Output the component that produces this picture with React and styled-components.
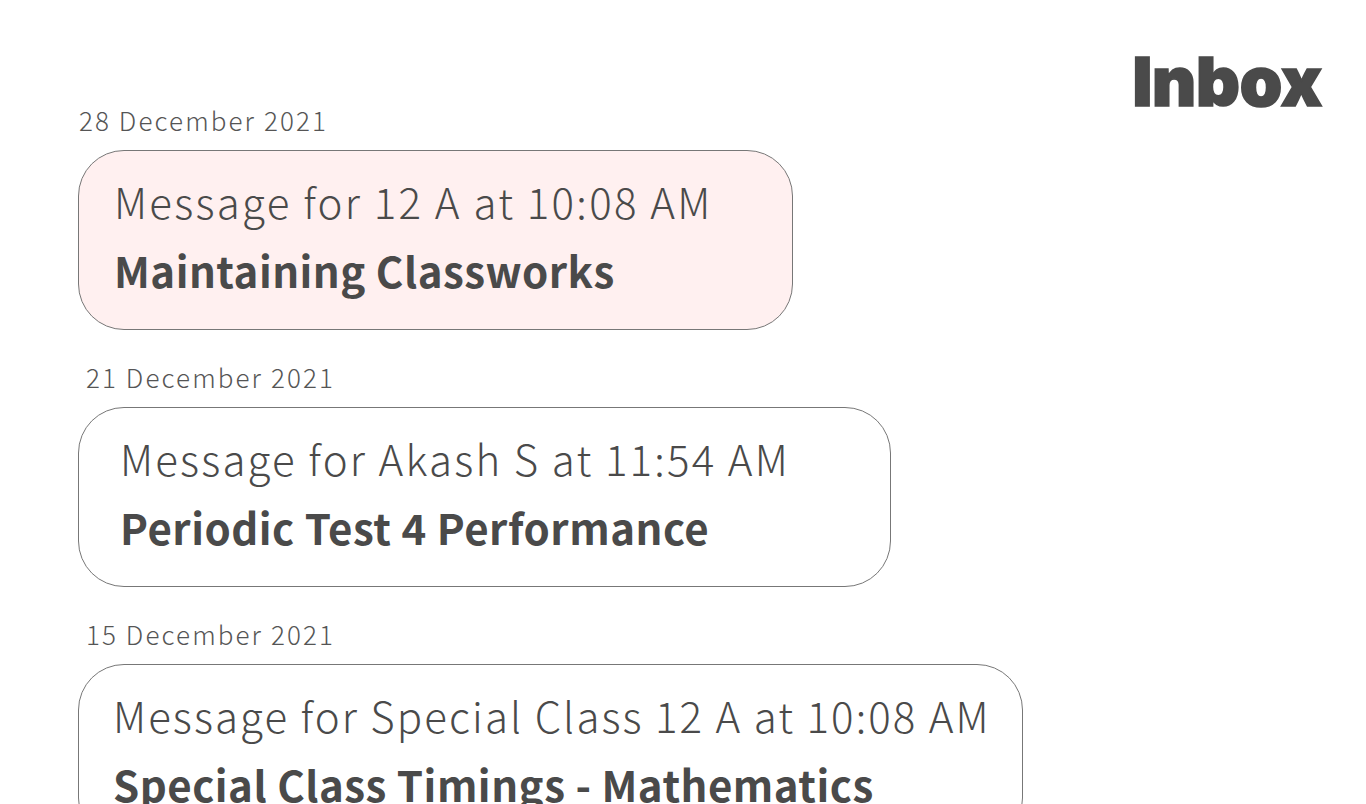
import React from "react";
import styled, { createGlobalStyle } from "styled-components";

const GlobalStyle = createGlobalStyle`
  body {
    margin: 0;
    background: #ffffff;
    font-family: "Noto Sans CJK JP", "Noto Sans", sans-serif;
    color: #4a4a4a;
  }
`;

const Page = styled.main`
  padding: 46px 44px 0 78px;
  height: 804px;
  box-sizing: border-box;
  overflow: hidden;
`;

const Header = styled.header`
  display: flex;
  justify-content: flex-end;
  align-items: flex-start;
  height: 59px;
  padding-top: 2px;
  box-sizing: border-box;
`;

const Title = styled.h1`
  margin: 0;
  font-family: Inter, "Liberation Sans", sans-serif;
  font-weight: 900;
  font-size: 68px;
  line-height: 66px;
  letter-spacing: -0.2px;
  color: #4a4a4a;
  -webkit-text-stroke: 1.6px #4a4a4a;
`;

const List = styled.section`
  display: flex;
  flex-direction: column;
  gap: 32px;
`;

const Entry = styled.article`
  display: flex;
  flex-direction: column;
  align-items: flex-start;
`;

const DateLabel = styled.div`
  font-size: 26px;
  line-height: 30px;
  font-weight: 300;
  letter-spacing: 2.1px;
  color: #555555;
  padding-left: ${p => p.$indent}px;
  margin-bottom: 15px;
`;

const Card = styled.div`
  box-sizing: border-box;
  height: 180px;
  border: 1px solid #777777;
  border-radius: 46px;
  background: ${p => (p.$unread ? "#fff0f0" : "#ffffff")};
  padding: 25px 0 0 ${p => p.$pad}px;
  display: flex;
  flex-direction: column;
  gap: 19px;
`;

const Meta = styled.div`
  font-size: 42px;
  line-height: 50px;
  font-weight: 300;
  letter-spacing: ${p => p.$spacing}px;
  white-space: nowrap;
`;

const Subject = styled.div`
  font-size: 42px;
  line-height: 50px;
  font-weight: 700;
  letter-spacing: 0.5px;
  white-space: nowrap;
`;

const messages = [
  {
    id: 1,
    date: "28 December 2021",
    indent: 1,
    meta: "Message for 12 A at 10:08 AM",
    subject: "Maintaining Classworks",
    width: 715,
    pad: 35,
    spacing: 2.3,
    unread: true
  },
  {
    id: 2,
    date: "21 December 2021",
    indent: 8,
    meta: "Message for Akash S at 11:54 AM",
    subject: "Periodic Test 4 Performance",
    width: 813,
    pad: 41,
    spacing: 2.2
  },
  {
    id: 3,
    date: "15 December 2021",
    indent: 8,
    meta: "Message for Special Class 12 A at 10:08 AM",
    subject: "Special Class Timings - Mathematics",
    width: 945,
    pad: 34,
    spacing: 2.1
  }
];

const App = () => (
  <>
    <GlobalStyle />
    <Page>
      <Header>
        <Title>Inbox</Title>
      </Header>
      <List>
        {messages.map(
          ({ id, date, indent, meta, subject, width, pad, spacing, unread }) => (
            <Entry key={id}>
              <DateLabel $indent={indent}>{date}</DateLabel>
              <Card $unread={unread} $pad={pad} style={{ width }}>
                <Meta $spacing={spacing}>{meta}</Meta>
                <Subject>{subject}</Subject>
              </Card>
            </Entry>
          )
        )}
      </List>
    </Page>
  </>
);

export default App;
